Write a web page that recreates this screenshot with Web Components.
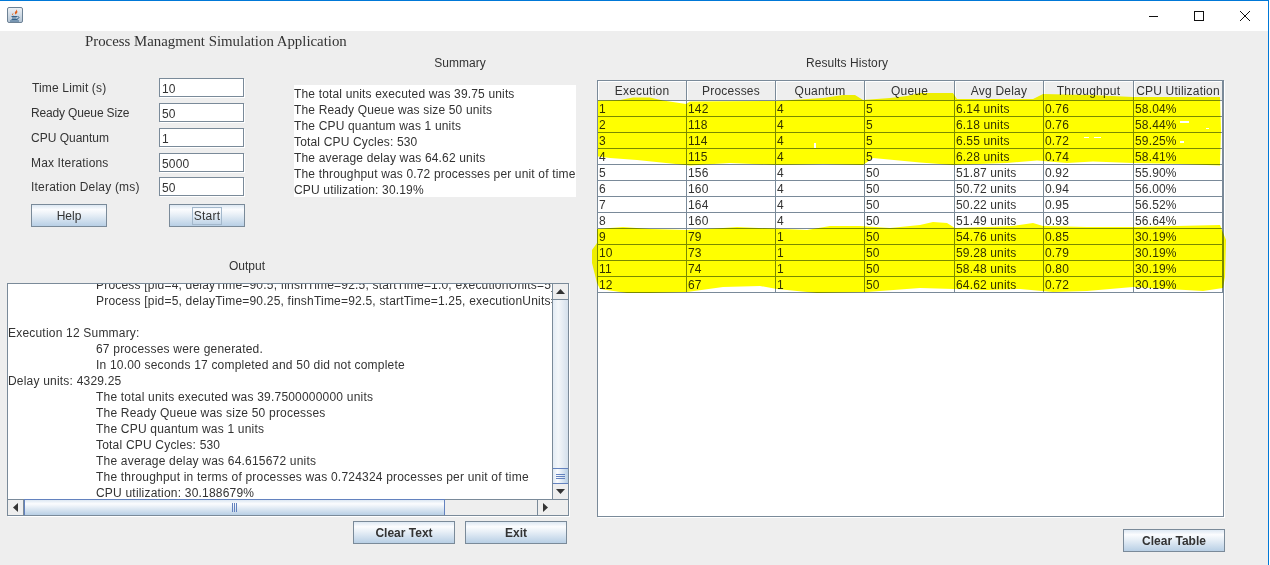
<!DOCTYPE html>
<html>
<head>
<meta charset="utf-8">
<title>Process Managment Simulation Application</title>
<style>
  html, body { margin: 0; padding: 0; background: #fff; }
  body { font: 12px "Liberation Sans", Arial, sans-serif; color: #333333; }
</style>
</head>
<body>
<sim-window>
  <title-bar slot="bar"></title-bar>
  <control-panel slot="left"></control-panel>
  <results-panel slot="right"></results-panel>
</sim-window>

<script>
class SimWindow extends HTMLElement {
    constructor() {
        super();
        this.attachShadow({mode: 'open'}).innerHTML = `
        <style>
          :host {
            display: flex; flex-direction: column;
            width: 1269px; height: 565px; box-sizing: border-box;
            border-top: 1px solid #0078d7; border-right: 1px solid #0078d7;
            background: #eeeeee; overflow: hidden;
          }
          .main { flex: 1; display: flex; min-height: 0; }
        </style>
        <slot name="bar"></slot>
        <div class="main">
          <slot name="left"></slot>
          <slot name="right"></slot>
        </div>`;
    }
}

class TitleBar extends HTMLElement {
    constructor() {
        super();
        this.attachShadow({mode: 'open'}).innerHTML = `
        <style>
          :host { display: flex; align-items: center; height: 30px; background: #fff; flex: none; }
          .app { margin: -2px 0 0 7px; width: 16px; height: 16px; display: block; }
          .ctl { width: 16px; height: 16px; display: block; margin-top: -1px; }
          .min { margin-left: auto; }
          .max { margin-left: 29px; }
          .close { margin-left: 30px; margin-right: 15px; }
        </style>
        <svg class="app" viewBox="0 0 16 16">
          <defs><linearGradient id="g" x1="0" y1="0" x2="0" y2="1">
            <stop offset="0" stop-color="#eef2f6"/><stop offset="1" stop-color="#b4c4d4"/>
          </linearGradient></defs>
          <rect x=".5" y=".5" width="15" height="15" rx="1.5" fill="url(#g)" stroke="#6d8295"/>
          <path d="M9.500 2c.8 1.700-2.500 2.600-1.400 4.700.2.400.5.700.8 1-.2-1 2.200-1.900 1.300-3.700-.2-.6-.4-1.300-.7-2z" fill="#e0601a"/>
          <path d="M6 6.500c-.8.700-.6 1.400.3 2" stroke="#e0601a" fill="none"/>
          <path d="M4.500 9.500h5.500M5 11h4.500M4.500 12.500h6M3 14h9M10.500 9.500c2 0 2 2-.5 2.500" stroke="#37658c" fill="none"/>
        </svg>
        <svg class="ctl min" viewBox="0 0 16 16"><path d="M3 8.500h9" stroke="#111" fill="none"/></svg>
        <svg class="ctl max" viewBox="0 0 16 16"><rect x="3.500" y="3.500" width="9" height="9" stroke="#111" fill="none"/></svg>
        <svg class="ctl close" viewBox="0 0 16 16"><path d="M3 3l10 10M13 3L3 13" stroke="#111" fill="none"/></svg>`;
    }
}

class SwingButton extends HTMLElement {
    constructor() {
        super();
        this.attachShadow({mode: 'open'}).innerHTML = `
        <style>
          :host {
            display: flex; align-items: center; justify-content: center;
            box-sizing: border-box; height: 23px; width: var(--w, 102px);
            border: 1px solid #7a8a99;
            background: linear-gradient(#dde8f3 0, #fbfcfe 22%, #e9f0f7 45%, #b8cfe5 100%);
            font: 12px "Liberation Sans", Arial, sans-serif; color: #333;
          }
          :host([bold]) { font-weight: bold; }
          :host([focused]) span { outline: 1px solid #a3b8cc; padding: 1px; letter-spacing: .2px; }
        </style>
        <span><slot></slot></span>`;
    }
}

class FieldRow extends HTMLElement {
    constructor() {
        super();
        this.attachShadow({mode: 'open'}).innerHTML = `
        <style>
          :host { display: flex; align-items: center; height: 19px; }
          .lbl { width: 128px; flex: none; }
          .val {
            box-sizing: border-box; width: 85px; height: 19px; padding: 1px 0 0 2px;
            background: #fff; border: 1px solid #7a8a99;
            box-shadow: 1px 1px 0 #fff; line-height: 18px; letter-spacing: .2px;
          }
        </style>
        <span class="lbl"><slot></slot></span>
        <span class="val">${this.getAttribute('value')}</span>`;
    }
}

class OutputPane extends HTMLElement {
    constructor() {
        super();
        this.attachShadow({mode: 'open'}).innerHTML = `
        <style>
          :host {
            display: grid; grid-template-columns: minmax(0, 1fr) 15px; grid-template-rows: minmax(0, 1fr) 16px;
            box-sizing: border-box; width: 562px; height: 233px;
            border: 1px solid #7a8a99; box-shadow: 1px 1px 0 #fff; background: #eeeeee;
          }
          .view { background: #fff; overflow: hidden; border-right: 1px solid #7a8a99; }
          .text { margin-top: -7px; line-height: 16px; white-space: nowrap; letter-spacing: .2px; }
          .vbar, .hbar { display: flex; background: #eeeeee; }
          .vbar { flex-direction: column; }
          .arrow { flex: none; height: 15px; box-sizing: border-box; display: flex; align-items: center; justify-content: center; background: #eeeeee; }
          .blank { flex: 1; background: linear-gradient(90deg, #e3ecf5, #f4f7fa 35%, #d4e0ec); }
          .vgrip { flex: none; height: 16px; box-sizing: border-box; display: flex; align-items: center; justify-content: center; background: linear-gradient(90deg, #dde8f3, #fbfcfe 30%, #b8cfe5); border: solid #6382bf; border-width: 1px 0; }
          .hbar { border-top: 1px solid #7a8a99; }
          .hthumb { width: 421px; flex: none; box-sizing: border-box; display: flex; align-items: center; justify-content: center; background: linear-gradient(#dde8f3, #fbfcfe 25%, #b8cfe5); border: 1px solid #6382bf; border-bottom: 0; margin-top: -1px; }
          .hrest { flex: 1; }
          .harrow { flex: none; width: 15px; display: flex; align-items: center; justify-content: center; }
          .corner { background: #eeeeee; border-top: 1px solid #7a8a99; }
        </style>
        <div class="view"><div class="text"><slot></slot></div></div>
        <div class="vbar">
          <div class="arrow" style="border-bottom:1px solid #7a8a99;height:16px"><svg width="9" height="5"><path d="M0 5h9L4.500 0z" fill="#333"/></svg></div>
          <div class="blank"></div>
          <div class="vgrip"><svg width="9" height="5"><path d="M0 .5h9M0 2.500h9M0 4.500h9" stroke="#6382bf"/></svg></div>
          <div class="arrow"><svg width="9" height="5"><path d="M0 0h9L4.500 5z" fill="#333"/></svg></div>
        </div>
        <div class="hbar">
          <div class="harrow" style="border-right:1px solid #7a8a99"><svg width="5" height="9"><path d="M5 0v9L0 4.500z" fill="#333"/></svg></div>
          <div class="hthumb"><svg width="5" height="9"><path d="M.5 0v9M2.500 0v9M4.500 0v9" stroke="#6382bf"/></svg></div>
          <div class="hrest"></div>
          <div class="harrow" style="border-left:1px solid #7a8a99"><svg width="5" height="9"><path d="M0 0v9l5-4.500z" fill="#333"/></svg></div>
        </div>
        <div class="corner"></div>`;
    }
}

const tab = text => `<div style="padding-left:88px">${text}</div>`;

class ControlPanel extends HTMLElement {
    constructor() {
        super();
        this.attachShadow({mode: 'open'}).innerHTML = `
        <style>
          :host { display: block; width: 597px; flex: none; }
          .top { display: grid; grid-template-columns: 263px 300px; grid-template-rows: 20px 1fr; height: 221px; padding-left: 31px; }
          h1 { grid-column: 1 / 3; margin: 0 0 0 54px; height: 20px; font: 14.85px/20px "Liberation Serif", "Times New Roman", serif; color: #333; white-space: nowrap; }
          .form { display: flex; flex-direction: column; padding-top: 27px; }
          field-row { margin-bottom: 6px; }
          field-row:nth-child(4) { margin-bottom: 5px; }
          .btns { display: flex; justify-content: space-between; width: 214px; margin-top: 2px; }
          .btns swing-button { --w: 76px; }
          .sum { width: 282px; }
          .sum h2, .out h2 { font: inherit; margin: 0; text-align: center; line-height: 16px; }
          .sum h2 { margin: 4px 0 14px 50px; }
          .sum .box { background: #fff; line-height: 16px; white-space: nowrap; overflow: hidden; height: 112px; padding-top: 1px; box-sizing: border-box; letter-spacing: .16px; }
          .out { padding-left: 7px; }
          .out h2 { width: 480px; margin-top: 6px; margin-bottom: 9px; }
          .foot { display: flex; justify-content: flex-end; gap: 10px; width: 560px; margin-top: 5px; }
        </style>
        <div class="top">
          <h1>Process Managment Simulation Application</h1>
          <div class="form">
            <field-row value="10" style="letter-spacing:.15px"><span style="margin-left:1px">Time Limit (s)</span></field-row>
            <field-row value="50" style="letter-spacing:-.15px">Ready Queue Size</field-row>
            <field-row value="1">CPU Quantum</field-row>
            <field-row value="5000" style="letter-spacing:.15px">Max Iterations</field-row>
            <field-row value="50" style="letter-spacing:.2px">Iteration Delay (ms)</field-row>
            <div class="btns">
              <swing-button>Help</swing-button>
              <swing-button focused>Start</swing-button>
            </div>
          </div>
          <div class="sum">
            <h2>Summary</h2>
            <div class="box">
              <div>The total units executed was 39.75 units</div>
              <div>The Ready Queue was size 50 units</div>
              <div>The CPU quantum was 1 units</div>
              <div>Total CPU Cycles: 530</div>
              <div>The average delay was 64.62 units</div>
              <div>The throughput was 0.72 processes per unit of time</div>
              <div>CPU utilization: 30.19%</div>
            </div>
          </div>
        </div>
        <div class="out">
          <h2>Output</h2>
          <output-pane>
            ${tab('Process [pid=4, delayTime=90.5, finshTime=92.5, startTime=1.0, executionUnits=5]')}
            ${tab('Process [pid=5, delayTime=90.25, finshTime=92.5, startTime=1.25, executionUnits=5]')}
            <div>&nbsp;</div>
            <div>Execution 12 Summary:</div>
            ${tab('67 processes were generated.')}
            ${tab('In 10.00 seconds 17 completed and 50 did not complete')}
            <div>Delay units: 4329.25</div>
            ${tab('The total units executed was 39.7500000000 units')}
            ${tab('The Ready Queue was size 50 processes')}
            ${tab('The CPU quantum was 1 units')}
            ${tab('Total CPU Cycles: 530')}
            ${tab('The average delay was 64.615672 units')}
            ${tab('The throughput in terms of processes was 0.724324 processes per unit of time')}
            ${tab('CPU utilization: 30.188679%')}
          </output-pane>
          <div class="foot">
            <swing-button bold>Clear Text</swing-button>
            <swing-button bold>Exit</swing-button>
          </div>
        </div>`;
    }
}

const HEADERS = ['Execution', 'Processes', 'Quantum', 'Queue', 'Avg Delay', 'Throughput', 'CPU Utilization'];
const ROWS = [
    [1, 142, 4, 5, '6.14 units', '0.76', '58.04%'],
    [2, 118, 4, 5, '6.18 units', '0.76', '58.44%'],
    [3, 114, 4, 5, '6.55 units', '0.72', '59.25%'],
    [4, 115, 4, 5, '6.28 units', '0.74', '58.41%'],
    [5, 156, 4, 50, '51.87 units', '0.92', '55.90%'],
    [6, 160, 4, 50, '50.72 units', '0.94', '56.00%'],
    [7, 164, 4, 50, '50.22 units', '0.95', '56.52%'],
    [8, 160, 4, 50, '51.49 units', '0.93', '56.64%'],
    [9, 79, 1, 50, '54.76 units', '0.85', '30.19%'],
    [10, 73, 1, 50, '59.28 units', '0.79', '30.19%'],
    [11, 74, 1, 50, '58.48 units', '0.80', '30.19%'],
    [12, 67, 1, 50, '64.62 units', '0.72', '30.19%'],
];

// marker scribbles traced from the screenshot, page coordinates
const SCRIBBLE_TOP = 'M598 100.500L620 100 633 97.500 650 97.500 663 100.500 686 104 690 101.500 776 101 823 98 843 95 855 95 863 100 890 98 907 96 920 93 953 93 957 99 1033 99 1043 94 1090 95 1133 97 1220 97 1221 130 1220 165.500 1180 164 1133 163 1093 161.500 1067 163 1037 160.500 1007 163 953 165 920 162.500 873 158 863 165 823 164 777 165 730 163 690 165.500 637 160 610 158 598 156.500Z'
    + 'M814 143h2v5h-2zM1084 137h5v1h-5zM1094 137h7v1h-7zM1180 121h9v2h-9zM1206 128h3v1h-3zM1180 141h4v2h-4z';
const SCRIBBLE_BOTTOM = 'M597 229L623 227 650 229 687 230 723 228 737 227 807 230 830 226 860 226 890 228 920 225 933 222 947 223 955 228 987 227 1013 226 1033 223 1043 226 1087 227 1133 227 1220 225 1226 240 1225 277 1223 288 1203 291 1133 287 1087 291 1053 292 1020 289 987 290 920 288 867 292 817 293 777 289 760 286 723 287 687 292 650 293 627 293 600 289 597 283 592 263 592 250 597 243Z';

class ResultsTable extends HTMLElement {
    constructor() {
        super();
        const head = HEADERS.map(h => `<div class="th">${h}</div>`).join('');
        const body = ROWS.flat().map(v => `<div class="td">${v}</div>`).join('');
        this.attachShadow({mode: 'open'}).innerHTML = `
        <style>
          :host {
            display: block; position: relative; box-sizing: border-box;
            width: 627px; height: 437px; background: #fff;
            border: 1px solid #7a8a99; box-shadow: 1px 1px 0 #fff;
          }
          .grid {
            display: grid;
            grid-template-columns: 89px 89px 89px 90px 89px 90px 89px;
            grid-template-rows: 20px repeat(12, 16px);
          }
          .th {
            background: #eeeeee; text-align: center; line-height: 20px;
            border-right: 1px solid #7a8a99; border-bottom: 1px solid #7a8a99;
            box-shadow: inset 1px 1px 0 #fff; white-space: nowrap; overflow: hidden;
            letter-spacing: .2px;
          }
          .td {
            box-sizing: border-box; padding-left: 1px; line-height: 16px;
            border-right: 1px solid #7a8a99; border-bottom: 1px solid #7a8a99;
            white-space: nowrap; overflow: hidden; letter-spacing: .15px;
          }
          svg { position: absolute; left: -1px; top: -1px; mix-blend-mode: multiply; pointer-events: none; overflow: visible; }
        </style>
        <div class="grid">${head}${body}</div>
        <svg width="627" height="437" viewBox="597 80 627 437">
          <path fill="#ffff00" fill-rule="evenodd" d="${SCRIBBLE_TOP}"/>
          <path fill="#ffff00" d="${SCRIBBLE_BOTTOM}"/>
        </svg>`;
    }
}

class ResultsPanel extends HTMLElement {
    constructor() {
        super();
        this.attachShadow({mode: 'open'}).innerHTML = `
        <style>
          :host { display: block; flex: 1; }
          h2 { font: inherit; margin: 24px 0 0; width: 500px; text-align: center; line-height: 16px; letter-spacing: .1px; }
          results-table { margin-top: 9px; }
          .foot { display: flex; justify-content: flex-end; width: 628px; margin-top: 12px; }
        </style>
        <h2>Results History</h2>
        <results-table></results-table>
        <div class="foot"><swing-button bold>Clear Table</swing-button></div>`;
    }
}

customElements.define('sim-window', SimWindow);
customElements.define('title-bar', TitleBar);
customElements.define('swing-button', SwingButton);
customElements.define('field-row', FieldRow);
customElements.define('output-pane', OutputPane);
customElements.define('control-panel', ControlPanel);
customElements.define('results-table', ResultsTable);
customElements.define('results-panel', ResultsPanel);
</script>
</body>
</html>
